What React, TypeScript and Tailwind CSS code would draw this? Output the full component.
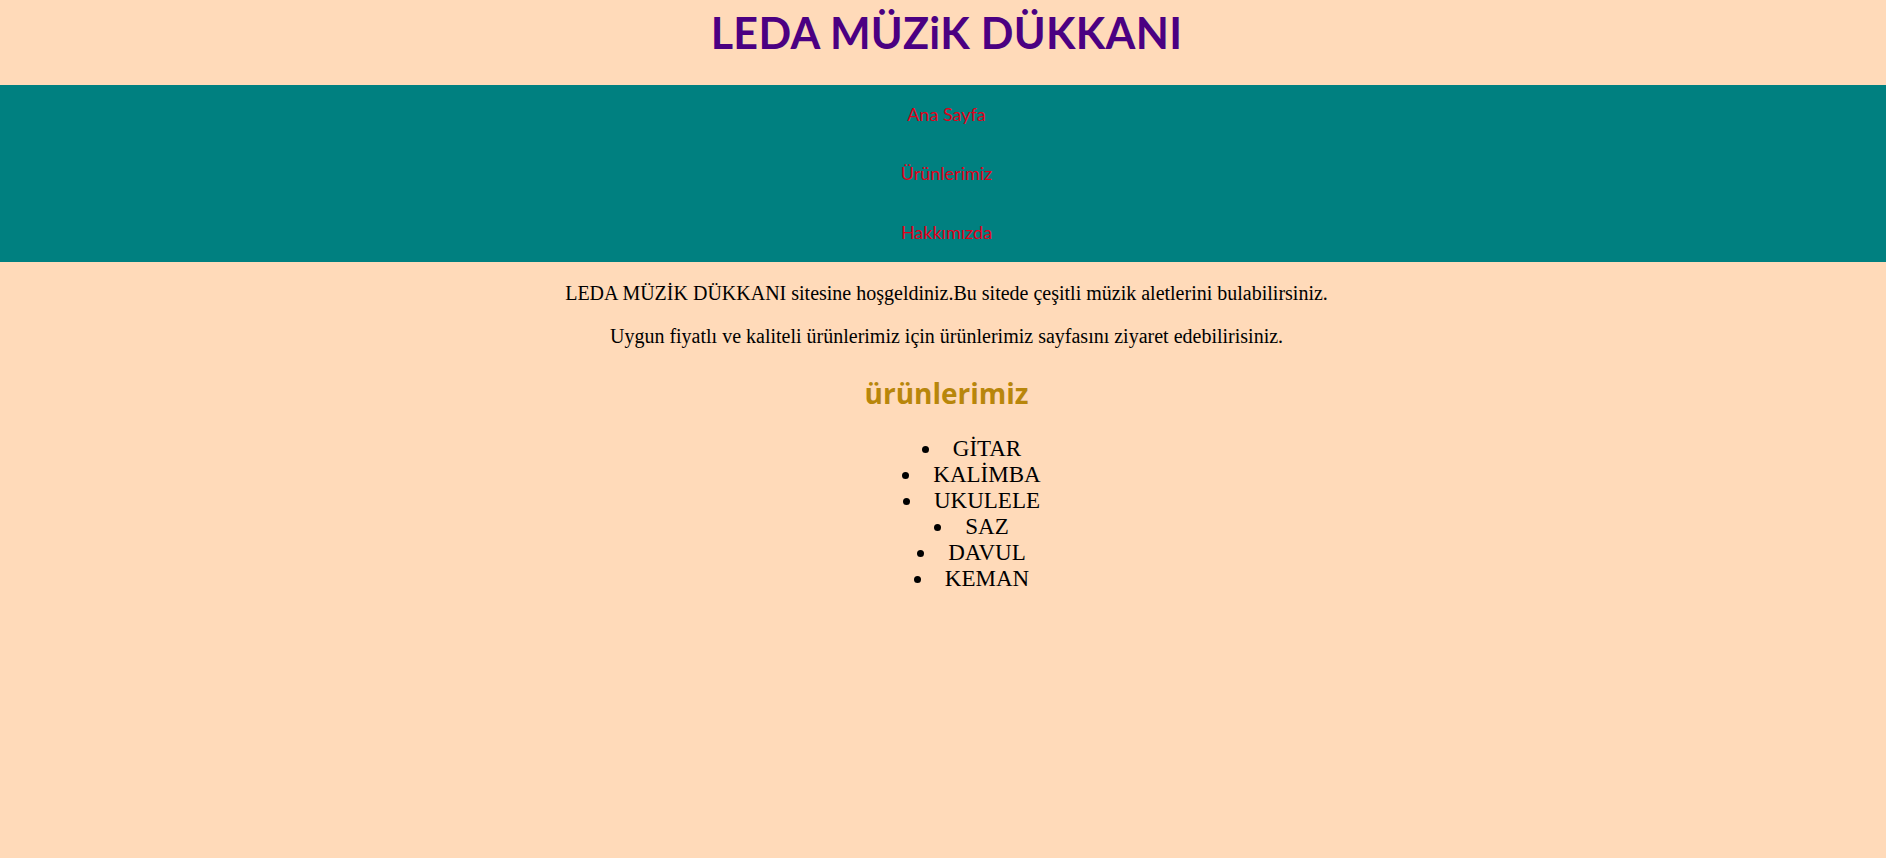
export default function App() {
  const urunler = ['GİTAR', 'KALİMBA', 'UKULELE', 'SAZ', 'DAVUL', 'KEMAN']
  const menu = ['Ana Sayfa', 'Ürünlerimiz', 'Hakkımızda']

  return (
    <div className="min-h-screen bg-[#ffdab9] pl-[7px] font-['Liberation_Serif',serif] text-black">
      {/* Başlık */}
      <header className="h-[85px] pt-[10px] text-center">
        <h1 className="font-['Lato',sans-serif] text-[43px] font-bold leading-[46px] tracking-[0.3px] text-[#4b0082]">
          LEDA MÜZiK DÜKKANI
        </h1>
      </header>

      {/* Menü */}
      <nav className="-ml-[7px] flex flex-col bg-[#008080] pl-[7px]">
        {menu.map((item) => (
          <a
            key={item}
            href="#"
            className="block h-[59px] text-center font-['Lato',sans-serif] text-[18px] leading-[59px] text-[#e0001b]"
          >
            {item}
          </a>
        ))}
      </nav>

      <main className="text-center">
        <p className="mt-[20px] text-[20px] leading-[22px]">
          LEDA MÜZİK DÜKKANI sitesine hoşgeldiniz.Bu sitede çeşitli müzik aletlerini bulabilirsiniz.
        </p>
        <p className="mt-[21px] text-[20px] leading-[22px]">
          Uygun fiyatlı ve kaliteli ürünlerimiz için ürünlerimiz sayfasını ziyaret edebilirisiniz.
        </p>

        <h2 className="mt-[29px] font-['Open_Sans',sans-serif] text-[28px] font-bold leading-[34px] text-[#b8860b]">
          ürünlerimiz
        </h2>

        <ul className="mt-[26px] list-inside list-disc pl-[50px] text-[23px] leading-[26px]">
          {urunler.map((u) => (
            <li key={u}>{u}</li>
          ))}
        </ul>
      </main>
    </div>
  )
}
